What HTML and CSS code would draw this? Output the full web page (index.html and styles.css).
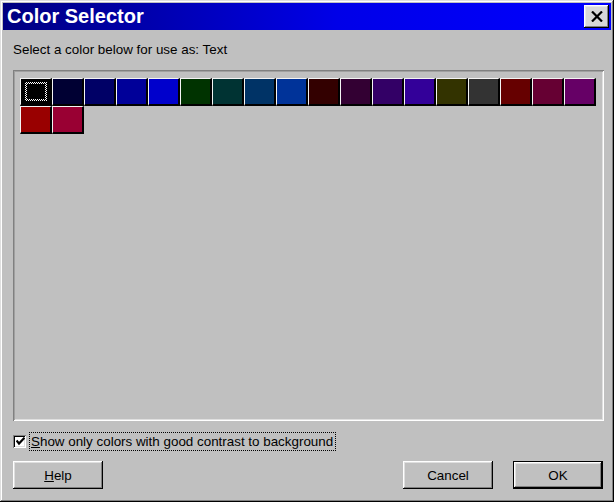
FILE: index.html
```html
<!DOCTYPE html>
<html>
<head>
<meta charset="utf-8">
<title>Color Selector</title>
<link rel="stylesheet" href="styles.css">
</head>
<body>
<div class="window">
  <div class="titlebar">
    <span class="title">Color Selector</span>
    <button class="close" aria-label="Close">
      <svg width="12" height="11" viewBox="0 0 12 11"><path d="M1 0.5 L11 10.5 M11 0.5 L1 10.5" stroke="#000" stroke-width="2.2" fill="none"/></svg>
    </button>
  </div>
  <div class="content">
    <div class="prompt">Select a color below for use as: Text</div>
    <div class="panel">
      <div class="grid">
        <div class="sw selected" style="background:#000000"><span class="focus"></span></div>
        <div class="sw" style="background:#000033"></div>
        <div class="sw" style="background:#000066"></div>
        <div class="sw" style="background:#000099"></div>
        <div class="sw" style="background:#0000cc"></div>
        <div class="sw" style="background:#003300"></div>
        <div class="sw" style="background:#003333"></div>
        <div class="sw" style="background:#003366"></div>
        <div class="sw" style="background:#003399"></div>
        <div class="sw" style="background:#330000"></div>
        <div class="sw" style="background:#330033"></div>
        <div class="sw" style="background:#330066"></div>
        <div class="sw" style="background:#330099"></div>
        <div class="sw" style="background:#333300"></div>
        <div class="sw" style="background:#333333"></div>
        <div class="sw" style="background:#660000"></div>
        <div class="sw" style="background:#660033"></div>
        <div class="sw" style="background:#660066"></div>
        <div class="sw" style="background:#990000"></div>
        <div class="sw" style="background:#990033"></div>
      </div>
    </div>
    <div class="checkrow">
      <span class="checkbox">
        <svg width="9" height="9" viewBox="0 0 9 9"><path d="M0.5 3.5 L3 6.5 L8.5 0.8" stroke="#000" stroke-width="2.2" fill="none"/></svg>
      </span>
      <span class="checklabel"><u>S</u>how only colors with good contrast to background</span>
    </div>
    <div class="buttons">
      <button class="btn"><u>H</u>elp</button>
      <span class="spacer"></span>
      <button class="btn">Cancel</button>
      <button class="btn default">OK</button>
    </div>
  </div>
</div>
</body>
</html>
```

FILE: styles.css
```css
html, body {
  margin: 0;
  padding: 0;
  background: #c0c0c0;
}
.window {
  width: 614px;
  height: 502px;
  box-sizing: border-box;
  padding: 3px;
  background: #c0c0c0;
  box-shadow: inset -1px -1px #000, inset 1px 1px #dfdfdf, inset -2px -2px #808080, inset 2px 2px #fff;
  display: flex;
  flex-direction: column;
  font-family: "Liberation Sans", Arial, sans-serif;
  font-size: 13.4px;
  color: #000;
}
.titlebar {
  height: 27px;
  flex: none;
  display: flex;
  align-items: center;
  background: linear-gradient(90deg, #000080 0%, #0000e8 55%, #0000ff 100%);
  padding-left: 4px;
  padding-right: 2px;
}
.title {
  flex: 1;
  color: #fff;
  font-weight: bold;
  font-size: 20px;
  line-height: 27px;
}
.close {
  width: 25px;
  height: 23px;
  padding: 0;
  margin: 0;
  border: none;
  background: #d8d8d8;
  box-shadow: inset -1px -1px #000, inset 1px 1px #fff, inset -2px -2px #808080, inset 2px 2px #e8e8e8;
  display: flex;
  align-items: center;
  justify-content: center;
}
.close svg { display: block; margin-top: -1px; }
.content {
  flex: 1;
  display: flex;
  flex-direction: column;
  padding: 0 7px 0 10px;
}
.prompt {
  margin-top: 12px;
  line-height: 15px;
  height: 15px;
}
.panel {
  margin-top: 13px;
  height: 351px;
  box-sizing: border-box;
  padding: 6px 5px;
  box-shadow: inset 1px 1px #808080, inset -1px -1px #fff, inset 2px 2px #a0a0a0, inset -2px -2px #dfdfdf;
}
.grid {
  margin-left: 2px;
  margin-top: 2px;
  display: grid;
  grid-template-columns: repeat(18, 32px);
  grid-auto-rows: 28px;
}
.sw {
  position: relative;
  box-sizing: border-box;
  border-style: solid;
  border-width: 1px 2px 2px 1px;
  border-color: #f4f4f4 #000 #000 #f4f4f4;
}
.focus {
  position: absolute;
  left: 4px;
  top: 3px;
  right: 3px;
  bottom: 3px;
  background: repeating-conic-gradient(#fff 0 25%, #000 0 50%) 0 0 / 2px 2px;
}
.focus::after {
  content: "";
  position: absolute;
  left: 2px;
  top: 2px;
  right: 2px;
  bottom: 2px;
  background: #000;
}
.checkrow {
  margin-top: 11px;
  height: 19px;
  display: flex;
  align-items: center;
}
.checkbox {
  width: 13px;
  height: 13px;
  box-sizing: border-box;
  background: #fff;
  box-shadow: inset 1px 1px #808080, inset -1px -1px #fff, inset 2px 2px #000, inset -2px -2px #dfdfdf;
  display: flex;
  align-items: center;
  justify-content: center;
}
.checkbox svg { display: block; margin-left: 1px; }
.checklabel {
  margin-left: 3px;
  padding: 1px 2px 1px 1px;
  line-height: 15px;
  border: 1px dotted #000;
}
.buttons {
  margin-top: 10px;
  display: flex;
  height: 28px;
  padding-right: 1px;
}
.spacer { flex: 1; }
.btn {
  width: 90px;
  height: 28px;
  margin: 0;
  padding: 0;
  border: none;
  background: #c0c0c0;
  font-family: "Liberation Sans", Arial, sans-serif;
  font-size: 13.4px;
  color: #000;
  box-shadow: inset -1px -1px #000, inset 1px 1px #fff, inset -2px -2px #808080, inset 2px 2px #dfdfdf;
}
.btn + .btn { margin-left: 20px; }
.btn.default {
  box-shadow: inset 0 0 0 1px #000, inset -2px -2px #000, inset 2px 2px #fff, inset -3px -3px #808080, inset 3px 3px #dfdfdf;
}
```
